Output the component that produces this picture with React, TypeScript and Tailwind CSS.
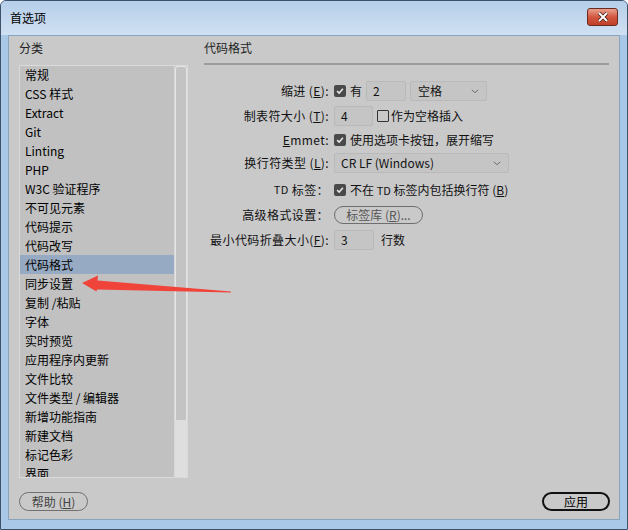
import React from "react";

const cats = [
  "常规",
  "CSS 样式",
  "Extract",
  "Git",
  "Linting",
  "PHP",
  "W3C 验证程序",
  "不可见元素",
  "代码提示",
  "代码改写",
  "代码格式",
  "同步设置",
  "复制 /粘贴",
  "字体",
  "实时预览",
  "应用程序内更新",
  "文件比较",
  "文件类型 / 编辑器",
  "新增功能指南",
  "新建文档",
  "标记色彩",
  "界面",
];

const font = { fontFamily: '"Noto Sans CJK SC", "Noto Sans", sans-serif' };

function Check() {
  return (
    <span className="flex h-[12px] w-[12px] shrink-0 items-center justify-center rounded-[2px] bg-[#4a4a4a]">
      <svg viewBox="0 0 12 12" className="h-[10px] w-[10px]">
        <path d="M2.5 6.2 L5 8.5 L9.5 3.2" fill="none" stroke="#e8e8e8" strokeWidth="1.8" />
      </svg>
    </span>
  );
}

function Box() {
  return <span className="block h-[12px] w-[12px] shrink-0 rounded-[1px] border border-[#333]" />;
}

function Chevron() {
  return (
    <svg viewBox="0 0 10 6" className="h-[5px] w-[8px]">
      <path d="M1 1 L5 4.5 L9 1" fill="none" stroke="#555" strokeWidth="1" />
    </svg>
  );
}

function Row({ label, className, children }: { label: React.ReactNode; className: string; children: React.ReactNode }) {
  return (
    <div className={"flex h-[20px] items-center " + className}>
      <div className="flex w-[125px] shrink-0 justify-end whitespace-nowrap text-[12px] tracking-[0.4px] text-[#111]">{label}</div>
      <div className="ml-[5px] flex items-center whitespace-nowrap text-[12px] text-[#111]">{children}</div>
    </div>
  );
}

function Input({ value, w }: { value: string; w: string }) {
  return (
    <div className={"flex h-[20px] items-center rounded-[2px] border border-[#b9b9b9] bg-[#c5c5c5] pl-[6px] text-[12px] text-[#111] " + w}>
      {value}
    </div>
  );
}

export default function App() {
  return (
    <div style={font} className="relative flex h-[530px] w-[628px] flex-col overflow-hidden rounded-t-[6px] border border-[#3d5269] bg-[#a9c8e8]">
      {/* title bar */}
      <div className="flex h-[34px] shrink-0 items-center justify-between bg-gradient-to-b from-[#b6cfea] to-[#cfe0f2] pl-[9px] pr-[9px]">
        <span className="text-[12px] text-black">首选项</span>
        <div className="mb-[2px] flex h-[18px] w-[31px] items-center justify-center rounded-[3px] border border-[#6b2a20] bg-gradient-to-b from-[#e8a08f] via-[#d2563e] to-[#c0402a]">
          <svg viewBox="0 0 12 10" className="h-[10px] w-[12px]">
            <path d="M2 1 L10 9 M10 1 L2 9" stroke="#3a1a14" strokeWidth="3.4" />
            <path d="M2 1 L10 9 M10 1 L2 9" stroke="#ffffff" strokeWidth="2" />
          </svg>
        </div>
      </div>

      {/* content */}
      <div className="mx-[7px] mb-[9px] flex flex-1 flex-col border border-[#8aa3bf] bg-[#c9c9c9] px-[10px]">
        <div className="flex flex-1">
          {/* left column */}
          <div className="flex w-[169px] shrink-0 flex-col">
            <div className="mt-[2px] h-[20px] text-[12px] leading-[20px] text-[#222]">分类</div>
            <div className="mt-[7px] flex h-[413px] overflow-hidden border border-[#dadada] bg-[#c1c1c1]">
              <div className="-mt-[1px] flex flex-1 flex-col">
                {cats.map((c, i) => (
                  <div
                    key={c}
                    className={
                      "flex h-[19px] shrink-0 items-center pl-[5px] text-[12px] text-black " +
                      (i === 10 ? "bg-[#97aac3]" : "")
                    }
                  >
                    {c}
                  </div>
                ))}
              </div>
              <div className="flex w-[13px] shrink-0 flex-col border-l border-[#d8d8d8]">
                <div className="h-[354px] rounded-t-[3px] border-x border-t border-[#e4e4e4] bg-[#c3c3c3]" />
                <div className="flex-1 bg-[#dedede]" />
              </div>
            </div>
          </div>

          {/* right column */}
          <div className="ml-[16px] flex w-[406px] flex-col">
            <div className="mt-[2px] h-[20px] text-[12px] leading-[20px] text-[#222]">代码格式</div>
            <div className="mt-[5px] h-[2px] bg-[#9d9d9d]" />

            <Row label={<>缩进 (<u>E</u>):</>} className="mt-[16px]">
              <Check />
              <span className="ml-[4px]">有</span>
              <div className="ml-[4px]">
                <Input value="2" w="w-[40px]" />
              </div>
              <div className="ml-[4px] flex h-[20px] w-[77px] items-center justify-between rounded-[2px] border border-[#b9b9b9] bg-[#c5c5c5] pl-[7px] pr-[7px]">
                <span>空格</span>
                <Chevron />
              </div>
            </Row>

            <Row label={<>制表符大小 (<u>T</u>):</>} className="mt-[5px]">
              <Input value="4" w="w-[39px]" />
              <span className="ml-[4px]">
                <Box />
              </span>
              <span className="ml-[2px]">作为空格插入</span>
            </Row>

            <Row label={<><u>E</u>mmet:</>} className="mt-[4px]">
              <Check />
              <span className="ml-[4px]">使用选项卡按钮，展开缩写</span>
            </Row>

            <Row label={<>换行符类型 (<u>L</u>):</>} className="mt-[3px]">
              <div className="flex h-[20px] w-[175px] items-center justify-between rounded-[2px] border border-[#b9b9b9] bg-[#c5c5c5] pl-[6px] pr-[7px] text-[12px]">
                <span>CR LF (Windows)</span>
                <Chevron />
              </div>
            </Row>

            <Row label={<><span className="mr-[3px] text-[11px]">TD</span>标签：</>} className="mt-[7px]">
              <Check />
              <span className="ml-[4px]">
                不在 <span className="text-[11px]">TD</span> 标签内包括换行符 (<u>B</u>)
              </span>
            </Row>

            <Row label="高级格式设置：" className="mt-[5px]">
              <div className="flex h-[18px] w-[89px] items-center justify-center rounded-full border border-[#6e6e6e] text-[12px] text-[#555]">
                标签库 (<u>R</u>)...
              </div>
            </Row>

            <Row label={<>最小代码折叠大小(<u>F</u>):</>} className="mt-[5px]">
              <Input value="3" w="w-[40px]" />
              <span className="ml-[7px]">行数</span>
            </Row>
          </div>
        </div>

        {/* bottom buttons */}
        <div className="mb-[8px] mt-[14px] flex items-center justify-between">
          <div className="flex h-[19px] w-[69px] items-center justify-center rounded-full border border-[#707070] text-[12px] text-[#444]">
            帮助 (<u>H</u>)
          </div>
          <div className="mr-[-1px] flex h-[19px] w-[68px] items-center justify-center rounded-full border-2 border-[#111] text-[12px] text-black">
            应用
          </div>
        </div>
      </div>

      {/* red arrow annotation */}
      <svg className="pointer-events-none absolute left-0 top-0" width="628" height="530" viewBox="0 0 628 530">
        <polygon
          points="81,282 97,274.5 96.5,279.5 230,290.5 230,291.5 96,288.5 95.5,290.5"
          fill="#f0443a"
        />
      </svg>
    </div>
  );
}
